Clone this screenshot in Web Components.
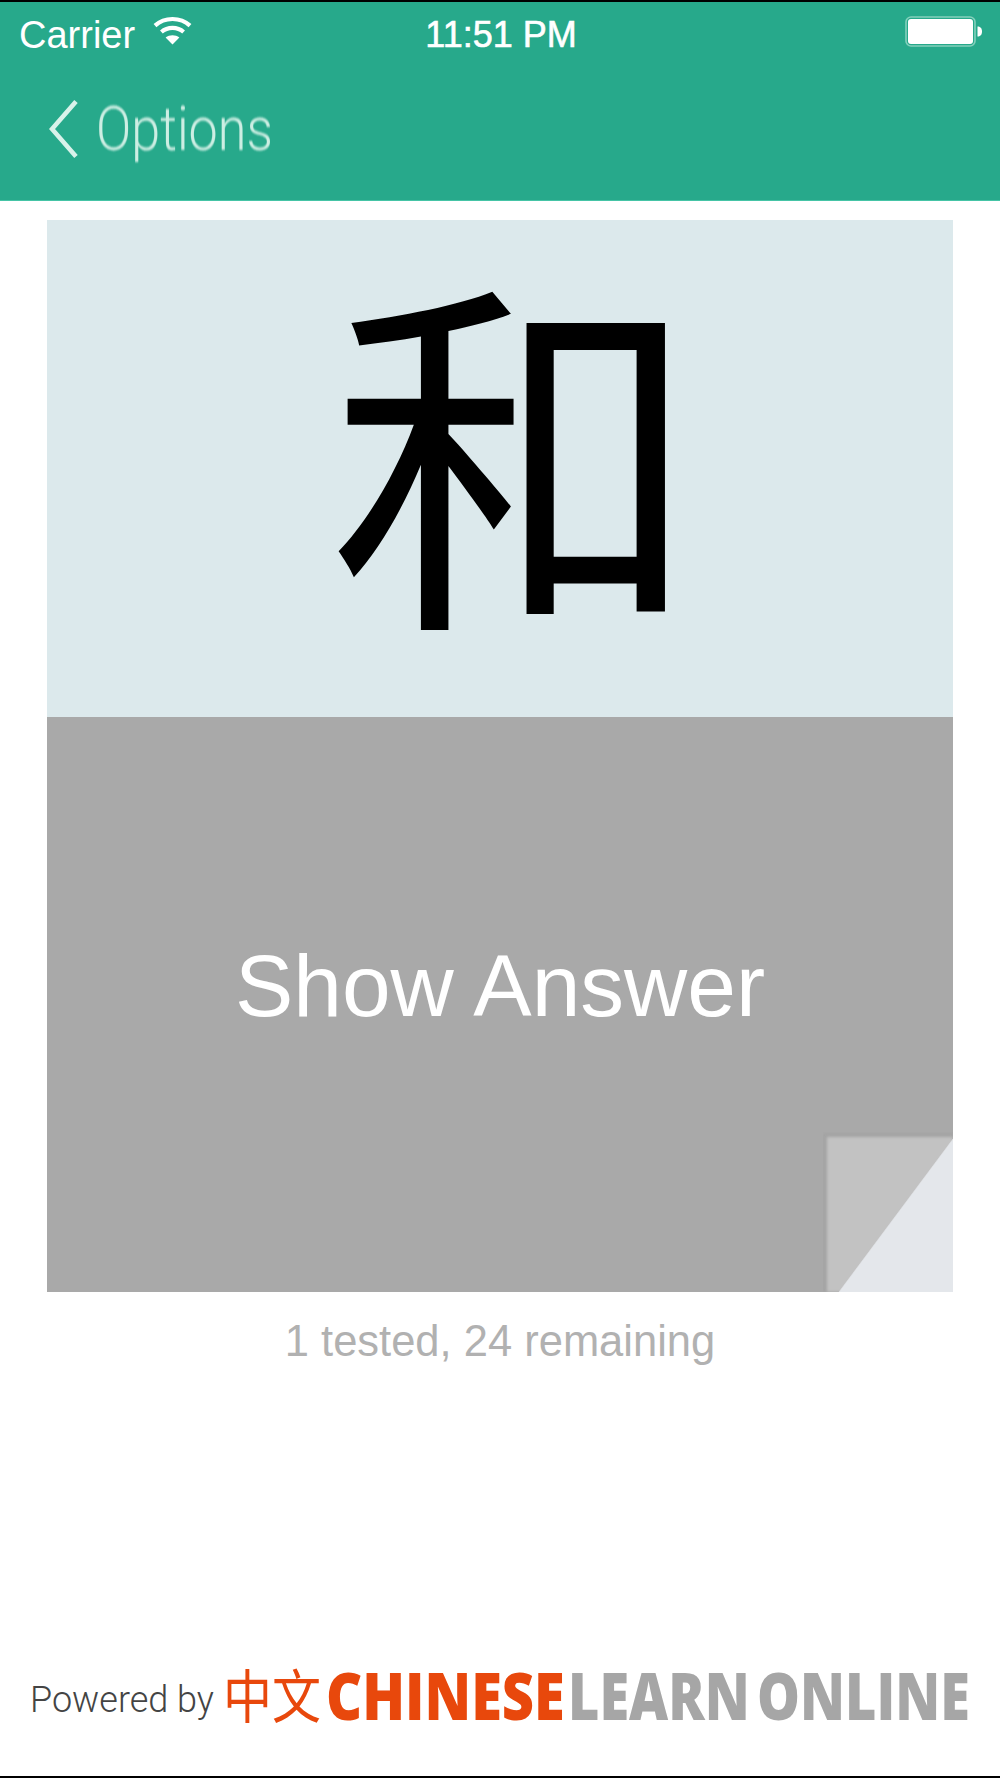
<!DOCTYPE html>
<html lang="en"><head><meta charset="utf-8"><title>Flashcard</title>
<style>html,body{margin:0;background:#fff}body{font-family:"Liberation Sans",sans-serif}</style></head>
<body>
<app-screen>
  <nav-header slot="header" back="Options"></nav-header>
  <flash-card hanzi="和" action="Show Answer"></flash-card>
  <progress-note>1 tested, 24 remaining</progress-note>
  <brand-footer slot="footer"></brand-footer>
</app-screen>
<script>
function def(name, html, after){
  customElements.define(name, class extends HTMLElement{
    constructor(){super();this.attachShadow({mode:'open'}).innerHTML=html;}
    connectedCallback(){ if(after) after(this); }
  });
}
def('app-screen',`<style>
:host{display:flex;flex-direction:column;width:1000px;height:1778px;box-sizing:border-box;border-top:2px solid #000;border-bottom:2px solid #000;background:#fff;overflow:hidden}
main{display:flex;flex-direction:column;align-items:center;padding-top:19px;flex:1}
</style><slot name="header"></slot><main><slot></slot></main><footer><slot name="footer"></slot></footer>`);
def('status-bar',`<style>
:host{display:grid;grid-template-columns:1fr auto 1fr;align-items:center;height:66px;padding:0 17px 0 19px;color:#fff;font:38px/1 "Liberation Sans",sans-serif}
.l{display:flex;align-items:center;gap:18px}
.t{font-size:36px;-webkit-text-stroke:.6px #fff;}
.r{justify-self:end;display:flex;align-items:center}
svg{display:block}
</style>
<div class="l"><span>Carrier</span>
<svg width="39" height="29" viewBox="0 0 39 29" style="margin-top:-10px"><g fill="none" stroke="#fff" stroke-width="4.2"><path d="M2 9.600C11.600 .8 27.400 .8 37 9.600"/><path d="M8.400 16C14.600 10.600 24.400 10.600 30.600 16"/></g><path d="M12.600 21.400C16.600 18.400 22.400 18.400 26.400 21.400L19.500 28.600Z" fill="#fff"/></svg></div>
<span class="t">11:51 PM</span>
<div class="r"><svg width="78" height="31" viewBox="0 0 78 31" style="margin-top:-7px"><rect x="1" y="1" width="69" height="29" rx="5" fill="none" stroke="#84d0bc" stroke-width="1.6"/><rect x="3" y="3" width="65" height="25" rx="3" fill="#fff"/><path d="M72.500 10.500C76 10.500 77 13 77 15.500C77 18 76 20.500 72.500 20.500Z" fill="#fff"/></svg></div>`);
def('nav-header',`<style>
:host{display:block;height:199px;box-sizing:border-box;background:#27a98b;border-bottom:1.500px solid #45c4a6}
.n{display:flex;align-items:center;height:122px;padding:0 0 0 49px;gap:17px;color:#cdeee3}
.n svg{display:block;filter:blur(.4px)}
.o{display:block;width:170px;height:72px;font:300 62px/72px Roboto,"Liberation Sans",sans-serif;transform:scaleX(.84);transform-origin:0 50%;white-space:nowrap;filter:blur(.8px)}
</style><status-bar></status-bar><div class="n">
<svg width="30" height="60" viewBox="0 0 30 60"><path d="M27 2.500L3 30L27 57.500" fill="none" stroke="#d8f2ea" stroke-width="4.600"/></svg>
<span class="o"></span></div>`, el=>{el.shadowRoot.querySelector('.o').textContent=el.getAttribute('back')});
def('flash-card',`<style>
:host{display:block;width:906px;position:relative}
.h{display:flex;align-items:center;justify-content:center;height:497px;background:#dce9ec;color:#000;font:372px/1 "Noto Sans CJK JP","Noto Sans CJK SC",sans-serif}
.h span{display:block;transform:translate(15px,-30px)}
.a{display:flex;align-items:center;justify-content:center;height:575px;background:#a9a9a9;color:#fff;font:87.500px/1 "Liberation Sans",sans-serif}
.a span{display:block;transform:translate(0,-18px)}
svg{position:absolute;right:0;bottom:0;display:block}
</style><div class="h"><span id="z"></span></div><div class="a"><span id="b"></span></div>
<svg width="130" height="160" viewBox="0 0 130 160"><defs><filter id="f" x="-20%" y="-20%" width="140%" height="140%"><feGaussianBlur stdDeviation="1.600"/></filter><clipPath id="c"><rect width="130" height="160"/></clipPath></defs>
<g clip-path="url(#c)"><path d="M0 1H130V160H0Z" fill="#a2a2a2" filter="url(#f)" opacity=".8"/><path d="M4 5H130V160H4Z" fill="#c2c2c2" filter="url(#f)"/><path d="M130 7V160H16Z" fill="#e4e7eb" stroke="#e4e7eb" stroke-width=".5"/></g></svg>`,
el=>{el.shadowRoot.getElementById('z').textContent=el.getAttribute('hanzi');el.shadowRoot.getElementById('b').textContent=el.getAttribute('action')});
def('progress-note',`<style>:host{display:block;margin-top:26px;color:#b1b1b1;font:43.500px/46px "Liberation Sans",sans-serif;text-align:center}</style><slot></slot>`);
def('brand-footer',`<style>
:host{display:flex;align-items:flex-end;height:118px;padding-left:30px;box-sizing:border-box;white-space:nowrap}
.p,.z,.w{flex:none;display:block}
.p{font:300 36px/1 Roboto,"Liberation Sans",sans-serif;color:#444;width:196px;margin-bottom:58px}
.z{font:49px/1 "Noto Sans CJK SC",sans-serif;color:#e8480c;width:100px;margin-bottom:54px;transform:translateX(-3px) scaleY(1.18);transform-origin:0 100%}
.w{font:800 65px/1 "Open Sans",sans-serif;transform-origin:0 100%;}
.c{color:#e8480c;width:245px;margin-bottom:48px;transform:scaleX(.86)}
.g{color:#a6a6a6;transform:translateX(-3px) scaleX(.83);margin-bottom:48px;word-spacing:-8px}
</style><span class="p">Powered by</span><span class="z">中文</span><span class="w c">CHINESE</span><span class="w g">LEARN ONLINE</span>`);
</script>
</body></html>
